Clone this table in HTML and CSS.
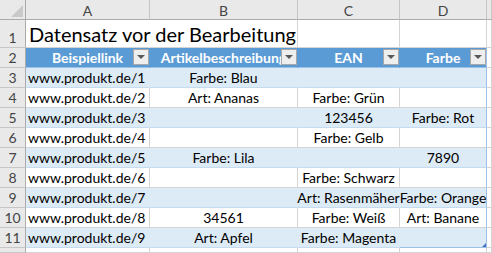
FILE: index.html
```html
<!DOCTYPE html>
<html lang="de">
<head>
<meta charset="utf-8">
<title>Datensatz</title>
<link rel="stylesheet" href="styles.css">
</head>
<body>
<div class="sheet">
  <div class="corner"><span class="tri"></span></div>
  <div class="colh">A</div>
  <div class="colh">B</div>
  <div class="colh">C</div>
  <div class="colh">D</div>
  <div class="colh"></div>

  <div class="rowh">1</div>
  <div class="c title-cell"><span class="title">Datensatz vor der Bearbeitung</span></div>
  <div class="c"></div>
  <div class="c"></div>
  <div class="c"></div>
  <div class="c"></div>

  <div class="rowh">2</div>
  <div class="c hdr"><span class="ht">Beispiellink</span><span class="fb"></span></div>
  <div class="c hdr"><span class="ht">Artikelbeschreibung</span><span class="fb"></span></div>
  <div class="c hdr"><span class="ht">EAN</span><span class="fb"></span></div>
  <div class="c hdr last"><span class="ht">Farbe</span><span class="fb"></span></div>
  <div class="c"></div>

  <div class="rowh">3</div>
  <div class="c band l">www.produkt.de/1</div>
  <div class="c band">Farbe: Blau</div>
  <div class="c band"></div>
  <div class="c band last"></div>
  <div class="c"></div>

  <div class="rowh">4</div>
  <div class="c l">www.produkt.de/2</div>
  <div class="c">Art: Ananas</div>
  <div class="c">Farbe: Grün</div>
  <div class="c last"></div>
  <div class="c"></div>

  <div class="rowh">5</div>
  <div class="c band l">www.produkt.de/3</div>
  <div class="c band"></div>
  <div class="c band">123456</div>
  <div class="c band last">Farbe: Rot</div>
  <div class="c"></div>

  <div class="rowh">6</div>
  <div class="c l">www.produkt.de/4</div>
  <div class="c"></div>
  <div class="c">Farbe: Gelb</div>
  <div class="c last"></div>
  <div class="c"></div>

  <div class="rowh">7</div>
  <div class="c band l">www.produkt.de/5</div>
  <div class="c band">Farbe: Lila</div>
  <div class="c band"></div>
  <div class="c band last">7890</div>
  <div class="c"></div>

  <div class="rowh">8</div>
  <div class="c l">www.produkt.de/6</div>
  <div class="c"></div>
  <div class="c">Farbe: Schwarz</div>
  <div class="c last"></div>
  <div class="c"></div>

  <div class="rowh">9</div>
  <div class="c band l">www.produkt.de/7</div>
  <div class="c band"></div>
  <div class="c band">Art: Rasenmäher</div>
  <div class="c band last">Farbe: Orange</div>
  <div class="c"></div>

  <div class="rowh">10</div>
  <div class="c l">www.produkt.de/8</div>
  <div class="c">34561</div>
  <div class="c">Farbe: Weiß</div>
  <div class="c last">Art: Banane</div>
  <div class="c"></div>

  <div class="rowh">11</div>
  <div class="c band l">www.produkt.de/9</div>
  <div class="c band">Art: Apfel</div>
  <div class="c band">Farbe: Magenta</div>
  <div class="c band last end"><span class="handle"></span></div>
  <div class="c"></div>

  <div class="rowh"></div>
  <div class="c"></div>
  <div class="c"></div>
  <div class="c"></div>
  <div class="c"></div>
  <div class="c"></div>
</div>
</body>
</html>
```

FILE: styles.css
```css
html, body {
  margin: 0;
  padding: 0;
  background: #ffffff;
}

.sheet {
  width: 492px;
  height: 253px;
  overflow: hidden;
  display: grid;
  grid-template-columns: 26px 124px 148px 102px 87px 1fr;
  grid-template-rows: 20px 28px 20px repeat(9, 20px) 1fr;
  font-family: Lato, "Liberation Sans", sans-serif;
  font-size: 14px;
  color: #000;
}

.corner {
  background: #e9e9e9;
  border-right: 1px solid #ababab;
  border-bottom: 1px solid #ababab;
  position: relative;
}

.corner .tri {
  position: absolute;
  right: 2px;
  bottom: 2px;
  width: 0;
  height: 0;
  border-left: 12px solid transparent;
  border-bottom: 12px solid #c9c9c9;
}

.colh {
  background: #e9e9e9;
  border-right: 1px solid #c6c6c6;
  border-bottom: 1px solid #ababab;
  display: flex;
  align-items: center;
  justify-content: center;
  color: #444;
  font-size: 14px;
  padding-top: 1px;
}

.rowh {
  background: #e9e9e9;
  border-right: 1px solid #ababab;
  border-bottom: 1px solid #c6c6c6;
  display: flex;
  align-items: flex-end;
  justify-content: center;
  padding-bottom: 1px;
  color: #444;
  font-size: 14px;
  box-sizing: border-box;
}

.c {
  box-sizing: border-box;
  border-right: 1px solid #d4d4d4;
  border-bottom: 1px solid #d4d4d4;
  display: flex;
  align-items: flex-end;
  justify-content: center;
  padding-bottom: 1px;
  white-space: nowrap;
  position: relative;
  min-width: 0;
}

.c.l {
  justify-content: flex-start;
  padding-left: 2px;
}

.title-cell {
  border-right-color: transparent;
  justify-content: flex-start;
  padding-left: 3px;
  padding-bottom: 0;
  overflow: visible;
  z-index: 1;
}

.title {
  font-size: 20px;
  line-height: 26px;
}

.hdr {
  background: #5b9bd5;
  border-right-color: #5b9bd5;
  border-bottom-color: #9bc2e6;
  color: #ffffff;
  font-weight: bold;
  overflow: hidden;
}

.hdr .ht {
  display: block;
}

.fb {
  position: absolute;
  right: 0;
  top: 1px;
  width: 16px;
  height: 16px;
  box-sizing: border-box;
  background: #eeeeee;
  border: 1px solid #a8a8a8;
}

.fb::after {
  content: "";
  position: absolute;
  left: 3px;
  top: 5px;
  width: 0;
  height: 0;
  border-left: 4px solid transparent;
  border-right: 4px solid transparent;
  border-top: 4px solid #595959;
}

.band {
  background: #ddebf7;
  border-right-color: #ddebf7;
  border-bottom-color: #c5dcf0;
}

.last {
  border-right-color: #9bc2e6;
}

.end {
  border-bottom-color: #9bc2e6;
}

.handle {
  position: absolute;
  right: 0;
  bottom: 0;
  width: 0;
  height: 0;
  border-left: 4px solid transparent;
  border-bottom: 4px solid #4472c4;
}
```
